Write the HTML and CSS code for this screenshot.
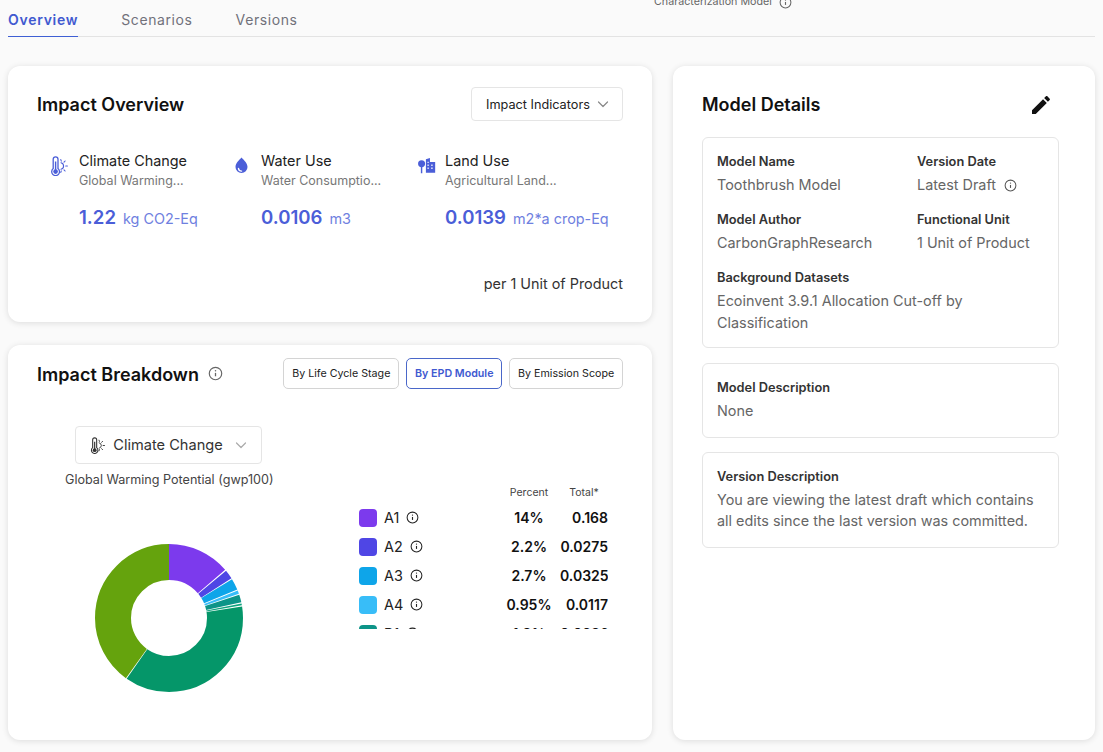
FILE: index.html
```html
<!DOCTYPE html>
<html lang="en">
<head>
<meta charset="utf-8">
<title>Model Overview</title>
<link rel="stylesheet" href="styles.css">
</head>
<body>
<svg class="defs" aria-hidden="true">
  <defs>
    <symbol id="i-climate" viewBox="0 0 18 20">
      <path d="M3.2 3.2a2.4 2.4 0 0 1 4.8 0v9.4a3.9 3.9 0 1 1-4.8 0z" fill="none" stroke="currentColor" stroke-width="1.3"/>
      <circle cx="5.6" cy="15.6" r="2.3" fill="currentColor"/>
      <rect x="4.900" y="5.500" width="1.400" height="9.500" fill="currentColor"/>
      <path d="M11 6.700a3.400 3.400 0 0 1 0 6.600M10.800 3.600l.5 1.500M15.100 5l-1.100 1.200M17.400 10h-1.700M15.100 15l-1.100-1.200M10.800 16.400l.5-1.500" fill="none" stroke="currentColor" stroke-width="1.100" stroke-linecap="round"/>
    </symbol>
    <symbol id="i-info" viewBox="0 0 14 14">
      <circle cx="7" cy="7" r="5.800" fill="none" stroke="currentColor" stroke-width="1.100"/>
      <path d="M7 6.400v3.200" stroke="currentColor" stroke-width="1.200" fill="none"/>
      <circle cx="7" cy="4.400" r=".7" fill="currentColor"/>
    </symbol>
    <symbol id="i-chev" viewBox="0 0 12 12">
      <path d="M1.500 4l4.500 4.500L10.500 4" fill="none" stroke="currentColor" stroke-width="1.200" stroke-linecap="round" stroke-linejoin="round"/>
    </symbol>
  </defs>
</svg>

<div class="char-model"><span>Characterization Model</span><svg class="info"><use href="#i-info"/></svg></div>

<nav class="tabs">
  <a class="tab active">Overview</a>
  <a class="tab">Scenarios</a>
  <a class="tab">Versions</a>
</nav>

<main class="layout">
  <div class="left">
    <section class="card overview">
      <header class="card-head">
        <h2>Impact Overview</h2>
        <button class="select select-sm">Impact Indicators <svg class="chev"><use href="#i-chev"/></svg></button>
      </header>
      <div class="metrics">
        <div class="metric">
          <svg class="metric-icon"><use href="#i-climate"/></svg>
          <div class="metric-body">
            <div class="metric-name">Climate Change</div>
            <div class="metric-sub">Global Warming...</div>
            <div class="metric-value"><b>1.22</b><span>kg CO2-Eq</span></div>
          </div>
        </div>
        <div class="metric">
          <svg class="metric-icon" viewBox="0 0 18 20"><path fill="currentColor" fill-rule="evenodd" d="M9.500 1.500c3 3.200 6 5.800 6 9.600a6 6 0 0 1-12 0c0-3.800 3-6.400 6-9.600zM6.500 11.800a.7.7 0 0 0-.7.800 3.800 3.800 0 0 0 3.800 3.200.7.7 0 0 0 0-1.400 2.400 2.400 0 0 1-2.400-2 .7.7 0 0 0-.7-.6z"/></svg>
          <div class="metric-body">
            <div class="metric-name">Water Use</div>
            <div class="metric-sub">Water Consumptio...</div>
            <div class="metric-value"><b>0.0106</b><span>m3</span></div>
          </div>
        </div>
        <div class="metric">
          <svg class="metric-icon metric-icon-land" viewBox="-2 0 20 20"><path fill="currentColor" d="M4.200 3.500a3.900 3.900 0 0 1 3.900 4 3.900 3.900 0 0 1-3.100 3.800v6.700H3.400v-6.700A3.900 3.900 0 0 1 .3 7.500a3.900 3.900 0 0 1 3.900-4z"/><path fill="currentColor" fill-rule="evenodd" d="M9 2.500l4.500-1.500v4.500h5.800V17.500H9zM10.800 5.200v1.600h1.300V5.200zM10.800 8.400V10h1.300V8.400zM10.800 11.600v1.600h1.300v-1.600zM15 8.400V10h1.400V8.400zM15 11.600v1.600h1.400v-1.600z"/></svg>
          <div class="metric-body">
            <div class="metric-name">Land Use</div>
            <div class="metric-sub">Agricultural Land...</div>
            <div class="metric-value"><b>0.0139</b><span>m2*a crop-Eq</span></div>
          </div>
        </div>
      </div>
      <p class="per">per 1 Unit of Product</p>
    </section>

    <section class="card breakdown">
      <header class="card-head">
        <div class="title-info">
          <h2>Impact Breakdown</h2>
          <svg class="info info-lg"><use href="#i-info"/></svg>
        </div>
        <div class="toggle">
          <button class="pill">By Life Cycle Stage</button>
          <button class="pill pill-on">By EPD Module</button>
          <button class="pill">By Emission Scope</button>
        </div>
      </header>
      <div class="chart-area">
        <div class="chart-col">
          <button class="select select-lg"><svg class="select-icon"><use href="#i-climate"/></svg>Climate Change <svg class="chev"><use href="#i-chev"/></svg></button>
          <p class="indicator">Global Warming Potential (gwp100)</p>
          <svg class="donut" viewBox="0 0 160 160">
            <g fill="none" stroke-width="36" transform="rotate(-90 80 80)">
              <circle class="seg" cx="80" cy="80" r="56" pathLength="100" stroke="#7c3aed" stroke-dasharray="13.700 86.300"/>
              <circle class="seg" cx="80" cy="80" r="56" pathLength="100" stroke="#4f46e5" stroke-dasharray="2 98" stroke-dashoffset="-14"/>
              <circle class="seg" cx="80" cy="80" r="56" pathLength="100" stroke="#0ea5e9" stroke-dasharray="2.500 97.500" stroke-dashoffset="-16.200"/>
              <circle class="seg" cx="80" cy="80" r="56" pathLength="100" stroke="#38bdf8" stroke-dasharray=".7 99.300" stroke-dashoffset="-18.950"/>
              <circle class="seg" cx="80" cy="80" r="56" pathLength="100" stroke="#0d9488" stroke-dasharray="1.700 98.300" stroke-dashoffset="-19.900"/>
              <circle class="seg" cx="80" cy="80" r="56" pathLength="100" stroke="#10a37f" stroke-dasharray=".4 99.600" stroke-dashoffset="-21.850"/>
              <circle class="seg" cx="80" cy="80" r="56" pathLength="100" stroke="#059669" stroke-dasharray="37.200 62.800" stroke-dashoffset="-22.500"/>
              <circle class="seg" cx="80" cy="80" r="56" pathLength="100" stroke="#65a30d" stroke-dasharray="40.100 59.900" stroke-dashoffset="-59.900"/>
            </g>
          </svg>
        </div>
        <div class="table-col">
          <div class="table-head"><span class="c-pct">Percent</span><span class="c-tot">Total*</span></div>
          <div class="rows">
            <div class="row"><i class="swatch s1"></i><span class="code">A1<svg class="info info-dark"><use href="#i-info"/></svg></span><b class="c-pct">14%</b><b class="c-tot">0.168</b></div>
            <div class="row"><i class="swatch s2"></i><span class="code">A2<svg class="info info-dark"><use href="#i-info"/></svg></span><b class="c-pct">2.2%</b><b class="c-tot">0.0275</b></div>
            <div class="row"><i class="swatch s3"></i><span class="code">A3<svg class="info info-dark"><use href="#i-info"/></svg></span><b class="c-pct">2.7%</b><b class="c-tot">0.0325</b></div>
            <div class="row"><i class="swatch s4"></i><span class="code">A4<svg class="info info-dark"><use href="#i-info"/></svg></span><b class="c-pct">0.95%</b><b class="c-tot">0.0117</b></div>
            <div class="row"><i class="swatch s5"></i><span class="code">B1<svg class="info info-dark"><use href="#i-info"/></svg></span><b class="c-pct">1.9%</b><b class="c-tot">0.0236</b></div>
          </div>
        </div>
      </div>
    </section>
  </div>

  <aside class="card details">
    <header class="details-head">
      <h2>Model Details</h2>
      <svg class="edit" viewBox="0 0 24 24"><path fill="currentColor" d="M3 17.250V21h3.750L17.810 9.940l-3.750-3.750L3 17.250zM20.710 7.040c.39-.39.39-1.020 0-1.410l-2.340-2.340c-.39-.39-1.020-.39-1.410 0l-1.830 1.830 3.750 3.750 1.830-1.830z"/></svg>
    </header>
    <div class="box box-grid">
      <div class="field"><h3>Model Name</h3><p>Toothbrush Model</p></div>
      <div class="field"><h3>Version Date</h3><p>Latest Draft <svg class="info"><use href="#i-info"/></svg></p></div>
      <div class="field"><h3>Model Author</h3><p>CarbonGraphResearch</p></div>
      <div class="field"><h3>Functional Unit</h3><p>1 Unit of Product</p></div>
      <div class="field wide"><h3>Background Datasets</h3><p>Ecoinvent 3.9.1 Allocation Cut-off by Classification</p></div>
    </div>
    <div class="box">
      <div class="field"><h3>Model Description</h3><p>None</p></div>
    </div>
    <div class="box">
      <div class="field"><h3>Version Description</h3><p>You are viewing the latest draft which contains all edits since the last version was committed.</p></div>
    </div>
  </aside>
</main>
</body>
</html>
```
FILE: styles.css
```css
* { box-sizing: border-box; }
html, body { height: 100%; }
body {
  margin: 0;
  height: 752px;
  overflow: hidden;
  background: #fafafa;
  color: #111;
  font-family: Inter, "Liberation Sans", sans-serif;
  position: relative;
}
.defs { position: absolute; width: 0; height: 0; }
h2, h3, p { margin: 0; }
button { font-family: inherit; cursor: pointer; background: #fff; color: inherit; }

.char-model {
  position: absolute;
  left: 654px;
  top: -6px;
  display: flex;
  align-items: center;
  gap: 7px;
  font-size: 10.7px;
  line-height: 16px;
  color: #666;
}
.char-model .info { color: #666; }

.info { width: 13px; height: 13px; color: #555; flex: none; }
.info-lg { width: 15px; height: 15px; color: #666; }
.info-dark { color: #222; }
.chev { width: 12px; height: 12px; color: #888; flex: none; }

.tabs {
  display: flex;
  gap: 43px;
  margin: 0 8px;
  height: 37px;
  padding-top: 9px;
  border-bottom: 1px solid #e3e3e3;
}
.tab {
  font-size: 14px;
  line-height: 22px;
  letter-spacing: .6px;
  color: #71717a;
  height: 28px;
}
.tab.active {
  color: #4059d0;
  font-weight: 600;
  letter-spacing: .72px;
  border-bottom: 1px solid #3f5fd4;
}

.layout {
  display: grid;
  grid-template-columns: 644px 422px;
  gap: 21px;
  margin: 29px 8px 0;
  height: 674px;
}
.left { display: flex; flex-direction: column; gap: 23px; min-height: 0; }
.card {
  background: #fff;
  border-radius: 12px;
  box-shadow: 0 1px 6px rgba(0, 0, 0, .12);
}
.card h2 { font-size: 18px; line-height: 24px; font-weight: 600; color: #111; }
.card-head { display: flex; justify-content: space-between; align-items: center; }
.card-head h2 { padding-top: 2px; }

.overview { height: 256px; padding: 21px 29px 0; }
.select {
  display: flex;
  align-items: center;
  border: 1px solid #e5e5e5;
  border-radius: 4px;
}
.select-sm {
  height: 34px;
  width: 152px;
  padding: 0 13px 0 14px;
  justify-content: space-between;
  font-size: 12.7px;
  color: #222;
}

.metrics {
  display: grid;
  grid-template-columns: 182px 184px 180px;
  margin-top: 30px;
  padding-left: 13px;
}
.metric { display: flex; align-items: flex-start; }
.metric-icon { width: 18px; height: 20px; margin-top: 5px; color: #4b5ed8; flex: none; overflow: visible; }
.metric-body { margin-left: 11px; white-space: nowrap; }
.metric-name { font-size: 14.4px; line-height: 20px; color: #222; }
.metric-sub { font-size: 12.5px; line-height: 18px; color: #777; margin-top: 1px; }
.metric-value { display: flex; align-items: baseline; gap: 7px; margin-top: 15px; color: #4b5ed8; }
.metric-value b { font-size: 18.6px; line-height: 24px; font-weight: 600; }
.metric-value span { font-size: 14.4px; color: #6f80e0; }

.per { margin-top: 45px; text-align: right; font-size: 14.4px; line-height: 20px; color: #333; }

.breakdown { height: 395px; padding: 13px 29px 0; }
.title-info { display: flex; align-items: center; gap: 9px; }
.toggle { display: flex; gap: 7px; }
.pill {
  height: 31px;
  padding: 0 7.800px;
  border: 1px solid #d4d4d4;
  border-radius: 5px;
  font-size: 10.7px;
  color: #222;
}
.pill-on { border-color: #4a67c9; color: #4059d0; font-weight: 600; }

.chart-area { display: flex; }
.chart-col { width: 322px; display: flex; flex-direction: column; align-items: flex-start; }
.select-lg {
  margin: 37px 0 0 38px;
  width: 187px;
  height: 38px;
  padding: 0;
  gap: 8px;
  justify-content: center;
  font-size: 14.6px;
  color: #333;
  white-space: nowrap;
}
.select-lg .chev { margin-left: 4px; color: #aaa; }
.select-icon { width: 15px; height: 17px; color: #333; }
.indicator { margin: 8px 0 0 28px; font-size: 12.6px; line-height: 16px; color: #444; white-space: nowrap; }
.donut { width: 160px; height: 160px; margin: 50px 0 0 52px; }
.seg { stroke-linecap: butt; }

.table-col { width: 249px; margin-top: 96px; }
.table-head, .row { display: grid; grid-template-columns: 18px 1fr 62px 48px; align-items: center; }
.table-head { height: 16px; font-size: 10.5px; line-height: 16px; color: #444; }
.table-head .c-pct { grid-column: 3; text-align: center; }
.table-head .c-tot { grid-column: 4; text-align: center; white-space: nowrap; }
.rows { height: 128px; overflow: hidden; padding-top: 2px; }
.row { height: 29px; font-size: 14px; color: #222; }
.swatch { width: 18px; height: 18px; border-radius: 4px; display: block; }
.s1 { background: #7c3aed; }
.s2 { background: #4f46e5; }
.s3 { background: #0ea5e9; }
.s4 { background: #38bdf8; }
.s5 { background: #0d9488; }
.code { margin-left: 7px; display: flex; align-items: center; gap: 7px; font-size: 14.4px; }
.row b { font-weight: 600; color: #111; white-space: nowrap; }
.row .c-pct { text-align: center; }
.row .c-tot { text-align: right; }

.details { padding: 27px 36px 0 29px; display: flex; flex-direction: column; gap: 14px; }
.details-head { display: flex; justify-content: space-between; align-items: center; height: 24px; margin-bottom: 6px; }
.edit { width: 24px; height: 24px; color: #111; margin-right: 6px; }
.box {
  border: 1px solid #e5e5e5;
  border-radius: 6px;
  padding: 15px 14px 15px;
}
.box-grid { display: grid; grid-template-columns: 200px 1fr; row-gap: 15.400px; padding-bottom: 14px; margin-bottom: 1px; }
.wide { grid-column: 1 / -1; }
.field h3 { font-size: 12.8px; line-height: 18px; font-weight: 600; color: #333; }
.field p { margin-top: 3px; font-size: 14.4px; line-height: 21.600px; color: #666; display: block; }
.field p .info { vertical-align: -2px; margin-left: 4px; }
```
